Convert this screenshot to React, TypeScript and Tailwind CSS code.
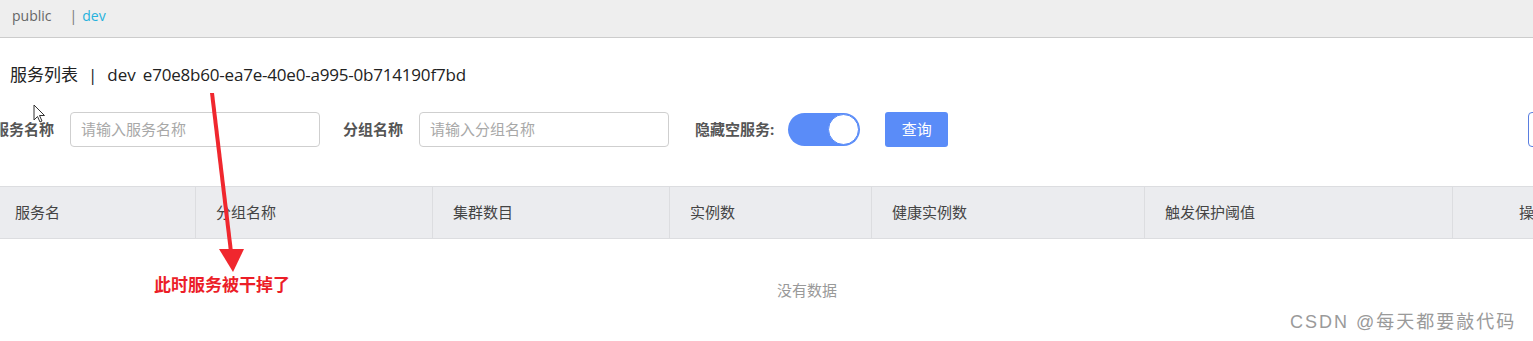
const font = "font-['Open_Sans','Noto_Sans_CJK_SC',sans-serif]";

const columns = [
  { title: "服务名", width: "w-[196px]", pad: "pl-[15px]" },
  { title: "分组名称", width: "w-[237px]", pad: "pl-[20px]" },
  { title: "集群数目", width: "w-[237px]", pad: "pl-[20px]" },
  { title: "实例数", width: "w-[202px]", pad: "pl-[20px]" },
  { title: "健康实例数", width: "w-[273px]", pad: "pl-[20px]" },
  { title: "触发保护阈值", width: "w-[308px]", pad: "pl-[20px]" },
];

const Field = ({ label, placeholder, first }: { label: string; placeholder: string; first?: boolean }) => (
  <div className="flex items-center shrink-0">
    <span className={`text-[15px] font-bold text-[#555] whitespace-nowrap ${first ? "ml-[-6px]" : ""}`}>{label}</span>
    <div className="ml-4 w-[250px] h-[35px] shrink-0 border border-[#cfcfcf] rounded-[4px] flex items-center px-[10px] text-[15px] text-[#a8a8a8] whitespace-nowrap">
      {placeholder}
    </div>
  </div>
);

export default function App() {
  return (
    <div className={`relative w-[1533px] h-[341px] overflow-hidden bg-white ${font}`}>
      {/* top tab bar */}
      <div className="h-[38px] bg-[#eeeeee] border-b border-[#cccccc] flex items-center pl-[12px] text-[14px] pb-[7px]">
        <span className="text-[#666]">public</span>
        <span className="ml-[18px] text-[#777]">|</span>
        <span className="ml-[5px] text-[#26b2dd]">dev</span>
      </div>

      {/* title */}
      <div className="pl-[10px] pt-[24px] text-[17px] text-[#222] leading-[26px] whitespace-nowrap">
        服务列表<span className="mx-[10px]">|</span>dev<span className="ml-[7px] tracking-[-0.2px]">e70e8b60-ea7e-40e0-a995-0b714190f7bd</span>
      </div>

      {/* search form */}
      <div className="flex items-center mt-[24px] h-[35px]">
        <Field label="服务名称" placeholder="请输入服务名称" first />
        <div className="ml-[23px] shrink-0">
          <Field label="分组名称" placeholder="请输入分组名称" />
        </div>
        <span className="ml-[26px] shrink-0 text-[15px] font-bold text-[#555] whitespace-nowrap">隐藏空服务:</span>
        <div className="ml-[14px] shrink-0 w-[72px] h-[33px] rounded-full bg-[#5a8cf8] flex items-center justify-end pr-[1px]">
          <div className="w-[31px] h-[31px] rounded-full bg-white border border-[#5a8cf8]" />
        </div>
        <div className="ml-[25px] shrink-0 w-[63px] h-[35px] rounded-[3px] bg-[#5a8cf8] text-white text-[15px] flex items-center justify-center">
          查询
        </div>
        <div className="ml-[580px] w-[40px] h-[35px] shrink-0 rounded-[4px] border border-[#5a7ee0]" />
      </div>

      {/* table header */}
      <div className="mt-[39px] flex h-[53px] bg-[#ebecef] border-y border-[#dcdde0] text-[15px] text-[#444]">
        {columns.map((c) => (
          <div key={c.title} className={`${c.width} ${c.pad} shrink-0 border-r border-[#dcdde0] flex items-center`}>
            {c.title}
          </div>
        ))}
        <div className="flex-1 flex items-center pl-[66px]">
          <span>操</span>
        </div>
      </div>

      {/* empty */}
      <div className="pt-[40px] pl-[777px] text-[15px] text-[#999]">没有数据</div>

      {/* annotation arrow */}
      <svg className="absolute left-0 top-0 pointer-events-none" width="400" height="300">
        <polygon points="210,93 214,93 233,252 229,252" fill="#f0272e" />
        <polygon points="219,249 244,249 233,272" fill="#f0272e" />
      </svg>
      <div className="absolute left-[154px] top-[272px] text-[17px] font-bold text-[#ec1e28] whitespace-nowrap">
        此时服务被干掉了
      </div>

      {/* mouse cursor */}
      <svg className="absolute left-[33px] top-[104px]" width="14" height="20" viewBox="0 0 14 20">
        <path d="M1 1 L1 16 L4.5 12.5 L7 18 L9 17 L6.5 11.5 L11.5 11.5 Z" fill="white" stroke="#333" strokeWidth="1" />
      </svg>

      {/* watermark */}
      <div className="absolute left-[1290px] top-[309px] text-[18px] tracking-[2px] text-[#9a9a9a] whitespace-nowrap font-['Liberation_Sans','Noto_Sans_CJK_SC',sans-serif]">
        CSDN @每天都要敲代码
      </div>
    </div>
  );
}
